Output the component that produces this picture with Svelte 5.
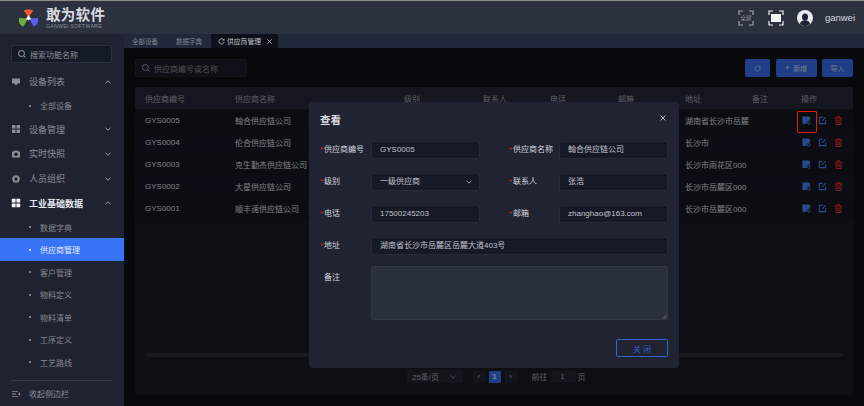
<script>
  const rows = [
    ['GYS0005', '翰合供应链公司', '湖南省长沙市岳麓'],
    ['GYS0004', '伦合供应链公司', '长沙市'],
    ['GYS0003', '克生勤杰供应链公司', '长沙市雨花区000'],
    ['GYS0002', '大星供应链公司', '长沙市岳麓区000'],
    ['GYS0001', '顺丰速供应链公司', '长沙市岳麓区000']
  ];
  const subItems = ['数据字典', '供应商管理', '客户管理', '物料定义', '物料清单', '工序定义', '工艺路线', '工序物料'];
</script>

{#snippet chevron(up)}
  <svg class="chev" viewBox="0 0 8 8"><path d={up ? 'M1.5 5.2 4 2.8l2.5 2.4' : 'M1.5 2.8 4 5.2l2.5-2.4'} /></svg>
{/snippet}

{#snippet cross(cls)}
  <svg class={cls} viewBox="0 0 8 8"><path d="M1.500 1.500l5 5M6.500 1.500l-5 5" /></svg>
{/snippet}

<div class="app">
  <header class="top">
    <div class="brand">
      <svg class="logo" viewBox="0 0 24 22">
        <path d="M12 11 6.600 3.600C8 1.800 16 1.800 17.400 3.600Z" fill="#ee5a2a" transform="translate(0 -1)" />
        <path d="M11.400 11.600 1.200 11C.2 15 2 19.500 6.200 20.600Z" fill="#6fae3a" />
        <path d="M12.600 11.600 22.800 11C23.800 15 22 19.500 17.800 20.600Z" fill="#5a5ff0" />
        <path d="M12 7.500 15 12 12 13.500 9 12Z" fill="#f4efe8" />
      </svg>
      <div class="brand-text">
        <div class="brand-cn">敢为软件</div>
        <div class="brand-en">GANWEI SOFTWARE</div>
      </div>
    </div>
    <div class="tools">
      <div class="fs-a">
        <span class="tag">全屏</span>
        <svg viewBox="0 0 16 16"><path d="M1 5V1h4M11 1h4v4M15 11v4h-4M5 15H1v-4" /></svg>
      </div>
      <div class="fs-b">
        <i></i>
        <svg viewBox="0 0 16 16"><path d="M1 5V1h4M11 1h4v4M15 11v4h-4M5 15H1v-4" /></svg>
      </div>
      <svg class="avatar" viewBox="0 0 16 16">
        <circle cx="8" cy="8" r="8" fill="#e8eaf0" />
        <ellipse cx="8" cy="7" rx="3" ry="3.600" fill="#1b2233" />
        <path d="M2.800 14c.8-3 3-3.800 5.200-3.800s4.400.8 5.200 3.800a8 8 0 0 1-10.400 0Z" fill="#1b2233" />
      </svg>
      <span class="user">ganwei</span>
    </div>
  </header>

  <div class="body">
    <aside class="side">
      <div class="side-search">
        <svg class="search" viewBox="0 0 10 10"><circle cx="4.500" cy="4.500" r="3" /><path d="m6.800 6.800 1.700 1.700" /></svg>
        <span>搜索功能名称</span>
      </div>
      <nav class="menu">
        <div class="group">
          <svg class="gi" viewBox="0 0 10 10"><path d="M1 1.500h8v5H6v1.500H4V6.500H1Z" /></svg>
          <span>设备列表</span>{@render chevron(true)}
        </div>
        <div class="sub"><b></b>全部设备</div>
        <div class="group">
          <svg class="gi" viewBox="0 0 10 10"><path d="M1 1h3.500v3.500H1ZM5.500 1H9v3.500H5.500ZM1 5.500h3.500V9H1ZM5.500 5.500H9V9H5.500Z" /></svg>
          <span>设备管理</span>{@render chevron(false)}
        </div>
        <div class="group">
          <svg class="gi" viewBox="0 0 10 10"><path fill-rule="evenodd" d="M1 2.500h2L3.800 1.500h2.400L7 2.500h2V8.500H1ZM5 3.600a1.800 1.800 0 1 0 0 3.600 1.800 1.800 0 0 0 0-3.600Z" /></svg>
          <span>实时快照</span>{@render chevron(false)}
        </div>
        <div class="group">
          <svg class="gi" viewBox="0 0 10 10"><path fill-rule="evenodd" d="M5 .8 6 1.800l1.500-.2.400 1.500 1.300.9-.7 1 .7 1-1.300.9-.4 1.500L6 8.200 5 9.200l-1-1-1.500.2-.4-1.500L.8 6l.7-1-.7-1 1.300-.9.4-1.500L4 1.800ZM5 3.300a1.700 1.700 0 1 0 0 3.400 1.700 1.700 0 0 0 0-3.400Z" /></svg>
          <span>人员组织</span>{@render chevron(false)}
        </div>
        <div class="group on">
          <svg class="gi" viewBox="0 0 10 10"><path d="M.8.800h3.800v3.800H.8ZM5.400.800h3.800v3.800H5.400ZM.8 5.400h3.800v3.800H.8ZM5.400 5.400h3.800v3.800H5.400Z" /></svg>
          <span>工业基础数据</span>{@render chevron(true)}
        </div>
        {#each subItems as item, i}
          <div class="sub" class:active={i === 1}><b></b>{item}</div>
        {/each}
      </nav>
      <div class="collapse">
        <svg class="gi" viewBox="0 0 10 10"><path d="M1 2h6v.8H1ZM1 4.600h4v.8H1ZM1 7.200h6V8H1ZM9 3v4L7 5Z" /></svg>
        <span>收起侧边栏</span>
      </div>
    </aside>

    <main class="main">
      <div class="tabs">
        <span class="tab">全部设备</span>
        <span class="tab">数据字典</span>
        <span class="tab cur">
          <svg viewBox="0 0 8 8"><path d="M6.700 2.400A3 3 0 1 0 7 4.500M7 1v1.600H5.400" /></svg>
          <span class="tab-t">供应商管理</span>
          {@render cross('tab-x')}
        </span>
      </div>
      <div class="content">
        <div class="bar">
          <div class="q">
            <svg class="search" viewBox="0 0 10 10"><circle cx="4.500" cy="4.500" r="3" /><path d="m6.800 6.800 1.700 1.700" /></svg>
            <span>供应商编号或名称</span>
          </div>
          <div class="btns">
            <button class="btn ic"><svg viewBox="0 0 8 8"><path d="M6.700 2.400A3 3 0 1 0 7 4.500M7 1v1.600H5.400" /></svg></button>
            <button class="btn add"><span class="plus">+</span> 新增</button>
            <button class="btn imp">导入</button>
          </div>
        </div>
        <div class="panel">
          <div class="row head">
            <span class="c1">供应商编号</span><span class="c2">供应商名称</span><span class="c3">级别</span><span class="c4">联系人</span><span class="c5">电话</span><span class="c6">邮箱</span><span class="c7">地址</span><span class="c8">备注</span><span class="c9">操作</span>
          </div>
          {#each rows as r}
            <div class="row">
              <span class="c1">{r[0]}</span><span class="c2">{r[1]}</span><span class="c3"></span><span class="c4"></span><span class="c5"></span><span class="c6"></span><span class="c7">{r[2]}</span><span class="c8"></span>
              <span class="c9 ops">
                <svg viewBox="0 0 10 10"><path fill="#4a86ff" d="M.5.500h7L9 2v3.200a3 3 0 0 0-3.800 3.800H.5Z" /><circle cx="7.500" cy="7.600" r="1.500" fill="none" stroke="#4a86ff" /></svg>
                <svg viewBox="0 0 10 10"><path fill="none" stroke="#4a86ff" stroke-width="1.200" d="M8.500 5v3.500h-7v-7H5M4.500 5.500 8.500 1.500" /></svg>
                <svg viewBox="0 0 10 10"><path fill="none" stroke="#e82a30" stroke-width="1.200" d="M1 2.200h8M3.700 2V1h2.600v1M2 2.500l.4 7h5.200l.4-7M4.200 4v3.800M5.800 4v3.800" /></svg>
              </span>
            </div>
          {/each}
          <div class="spacer"></div>
          <div class="scroll"></div>
          <div class="pager">
            <span class="sz">25条/页 {@render chevron(false)}</span>
            <span class="pg prev">‹</span><span class="pg one">1</span><span class="pg">›</span>
            <span class="go">前往</span><span class="pg box">1</span><span class="go2">页</span>
          </div>
        </div>
      </div>
      <div class="overlay"></div>
      <div class="hl"></div>
      <section class="modal">
        <div class="m-head"><h2>查看</h2>{@render cross('x')}</div>
        <div class="form">
          <label class="req">供应商编号</label><div class="inp">GYS0005</div>
          <label class="req r">供应商名称</label><div class="inp">翰合供应链公司</div>
          <label class="req">级别</label><div class="inp sel">一级供应商 {@render chevron(false)}</div>
          <label class="req r">联系人</label><div class="inp">张浩</div>
          <label class="req">电话</label><div class="inp">17500245203</div>
          <label class="req r">邮箱</label><div class="inp">zhanghao@163.com</div>
          <label class="req">地址</label><div class="inp wide">湖南省长沙市岳麓区岳麓大道403号</div>
          <label class="note">备注</label>
          <div class="ta"><svg viewBox="0 0 6 6"><path d="M5.500 1 1 5.500M5.500 3.500 3.500 5.500" /></svg></div>
        </div>
        <div class="m-foot"><button class="close">关 闭</button></div>
      </section>
    </main>
  </div>
</div>

<style>
  :global(body) { margin: 0; background: #0a0c12; }
  .app {
    width: 864px; height: 406px; overflow: hidden; display: flex; flex-direction: column;
    font-family: "Liberation Sans", "Noto Sans CJK SC", sans-serif; font-size: 8px; color: #9a9da5;
  }
  .top {
    height: 34px; box-sizing: border-box; flex: none; display: flex; justify-content: space-between; align-items: center;
    background: #2c3140; border-top: 1px solid #8a8a8a; padding: 0 9px 0 18px;
  }
  .brand { display: flex; align-items: center; gap: 7px; }
  .logo { width: 21px; height: 20px; }
  .brand-cn { font-size: 14.500px; font-weight: 700; color: #d8dae0; line-height: 16px; letter-spacing: .3px; }
  .brand-en { font-size: 5.200px; color: #8b8f9b; line-height: 6px; letter-spacing: .28px; }
  .tools { display: flex; align-items: center; }
  .fs-a, .fs-b { position: relative; width: 16px; height: 16px; }
  .fs-a svg, .fs-b svg { position: absolute; inset: 0; fill: none; stroke-width: 1.200; }
  .fs-a svg { stroke: #a2a6b0; }
  .fs-b svg { stroke: #f0f2f5; }
  .fs-a { margin-right: 14px; }
  .fs-b { margin-right: 13px; }
  .tag { position: absolute; inset: 0; text-align: center; line-height: 16px; font-size: 5.500px; color: #a2a6b0; }
  .fs-b i { position: absolute; left: 3px; top: 4px; width: 10px; height: 8px; background: #f4f5f8; }
  .avatar { width: 16px; height: 16px; margin-right: 12px; }
  .user { font-size: 9.500px; color: #d4d7de; }

  .body { flex: 1; display: flex; min-height: 0; }
  .side { width: 124px; flex: none; display: flex; flex-direction: column; background: #1f2331; }
  .side-search {
    margin: 11px 12px 0 11px; height: 18px; box-sizing: border-box; flex: none; display: flex; align-items: center; gap: 3px; padding-left: 5px;
    background: #151a28; border: 1px solid #2b3040; border-radius: 2px; color: #8e919a; font-size: 8px;
  }
  .search { width: 10px; height: 10px; fill: none; stroke: #a0a3ab; stroke-width: 1; flex: none; }
  .menu { flex: 1; overflow: hidden; min-height: 0; padding-top: 6.500px; }
  .group { height: 24.750px; display: flex; align-items: center; padding: 0 12px 0 11px; font-size: 9px; color: #8b8e97; }
  .group > span { flex: 1; margin-left: 8px; }
  .gi { width: 10px; height: 10px; fill: #8b8e97; flex: none; }
  .group.on { color: #e6e8ed; font-weight: 700; }
  .group.on .gi { fill: #f4f5f8; }
  .chev { width: 8px; height: 8px; fill: none; stroke: #9a9da5; stroke-width: 1; flex: none; }
  .sub { height: 22.500px; display: flex; align-items: center; padding-left: 29px; font-size: 8px; color: #85888f; }
  .sub b { width: 2px; height: 2px; background: #9a9da5; border-radius: 50%; margin-right: 9px; }
  .sub.active { background: #3874f6; color: #e8eeff; }
  .sub.active b { background: #fff; }
  .collapse {
    height: 25px; margin: 0 12px 0 11px; flex: none; display: flex; align-items: center; gap: 8px; border-top: 1px solid #383c4a;
    font-size: 8px; color: #8b8e97;
  }

  .main { flex: 1; position: relative; min-width: 0; display: flex; flex-direction: column; }
  .tabs { height: 14px; flex: none; display: flex; gap: 18px; background: #21283a; font-size: 6.500px; color: #7f838d; padding-left: 8px; }
  .tab { display: flex; align-items: center; white-space: nowrap; }
  .tab.cur { margin-left: -9px; padding: 0 5px 0 7px; background: #0e1119; color: #c4c7ce; }
  .tab svg { width: 7px; height: 7px; fill: none; stroke: #c4c7ce; stroke-width: .9; flex: none; }
  .tab-t { margin: 0 5px 0 2px; font-size: 6.800px; }
  .content { flex: 1; background: #0f1119; padding: 11px; min-height: 0; display: flex; flex-direction: column; }
  .bar { height: 28px; flex: none; display: flex; justify-content: space-between; align-items: flex-start; }
  .q {
    width: 112px; height: 18px; box-sizing: border-box; display: flex; align-items: center; gap: 3px; padding-left: 5px;
    background: #1a1e2a; border: 1px solid #242835; border-radius: 2px; color: #8e9099; font-size: 8px;
  }
  .btns { display: flex; gap: 5.500px; }
  .btn {
    height: 18px; border: 0; border-radius: 2px; background: #3874f6; color: #d4def5; font: inherit; font-size: 7px; padding: 0;
    display: flex; align-items: center; justify-content: center; gap: 3px;
  }
  .btn.ic { width: 25px; }
  .btn.ic svg { width: 7px; height: 7px; fill: none; stroke: #d4def5; stroke-width: .9; }
  .btn.add { width: 41px; }
  .plus { font-size: 9px; line-height: 9px; }
  .btn.imp { width: 31px; }
  .panel { flex: 1; background: #191c27; display: flex; flex-direction: column; min-height: 0; }
  .row { height: 22px; flex: none; display: flex; align-items: center; background: #151823; color: #e0e2e8; font-size: 8px; }
  .row:nth-child(odd) { background: #181b27; }
  .row.head { background: #262b39; color: #a8abb3; }
  .row span { white-space: nowrap; overflow: hidden; flex: none; }
  .c1 { width: 100px; padding-left: 10px; box-sizing: border-box; }
  .c2 { width: 169px; }
  .c3 { width: 79px; }
  .c4 { width: 67px; }
  .c5 { width: 68px; }
  .c6 { width: 67px; }
  .c7 { width: 67px; }
  .c8 { width: 49px; }
  .c9 { width: 50px; }
  .ops { display: flex; align-items: center; gap: 7px; padding-left: 1px; box-sizing: border-box; }
  .ops svg { width: 9px; height: 9px; flex: none; }
  .spacer { flex: 1; }
  .scroll { height: 4px; margin: 0 10px; background: #2c303c; border-radius: 2px; flex: none; }
  .pager { height: 38px; flex: none; display: flex; align-items: center; justify-content: center; gap: 4px; color: #a8abb3; font-size: 8px; padding: 1px 0 0 4px; box-sizing: border-box; }
  .sz { display: flex !important; align-items: center; gap: 10px; width: 56px; height: 13px; justify-content: center; background: #232735; margin-right: 6px; }
  .pg { width: 12px; height: 12px; text-align: center; line-height: 12px; background: #232735; border-radius: 1px; }
  .pg.one { background: #3874f6; color: #e4ebfb; font-weight: 700; }
  .pg.box { width: 26px; margin: 0 -2px; }
  .go { margin-left: 11px; }

  .overlay { position: absolute; inset: 14px 0 0 0; background: rgba(0, 0, 0, .45); }
  .hl { position: absolute; left: 673px; top: 77px; width: 18px; height: 20px; border: 1.500px solid #e8120f; border-radius: 1px; }
  .modal {
    position: absolute; left: 185px; top: 68px; width: 370px; height: 266px; box-sizing: border-box;
    background: #1f2332; border-radius: 3px; padding: 0 11px; color: #d4d6dc;
  }
  .m-head { display: flex; justify-content: space-between; align-items: center; height: 36px; }
  h2 { margin: 0; font-size: 10.500px; font-weight: 700; color: #d8dae0; line-height: 36px; }
  .x { width: 8px; height: 8px; fill: none; stroke: #c8cad0; stroke-width: .9; margin: -4px 1px 0 0; }
  .form { display: grid; grid-template-columns: 51px 109px 79px 109px; row-gap: 14px; margin-top: 3px; }
  label { height: 18px; line-height: 18px; font-size: 8px; white-space: nowrap; position: relative; padding-left: 4px; }
  label.r { padding-left: 33px; }
  .req::before { content: '*'; color: #e21d1d; position: absolute; margin-left: -4px; }
  .inp {
    height: 18px; box-sizing: border-box; border: 1px solid #262a39; border-radius: 2px; background: #161a26; line-height: 16px;
    padding-left: 8px; font-size: 8px; color: #c0c3ca;
  }
  .sel { display: flex; align-items: center; justify-content: space-between; padding-right: 6px; }
  .wide { grid-column: 2 / 5; }
  .note { height: 54px; }
  .ta {
    grid-column: 2 / 5; height: 54px; box-sizing: border-box; background: #2b303e; border: 1px solid #333848; border-radius: 2px;
    display: flex; justify-content: flex-end; align-items: flex-end; margin-top: -3px;
  }
  .ta svg { width: 5px; height: 5px; fill: none; stroke: #9a9da5; stroke-width: .7; }
  .m-foot { display: flex; justify-content: flex-end; margin-top: 16px; }
  .close {
    width: 52px; height: 18px; border: 1px solid #3560c4; border-radius: 2px; background: transparent; color: #3560c4; font: inherit; font-size: 8px; padding: 0;
  }
</style>
